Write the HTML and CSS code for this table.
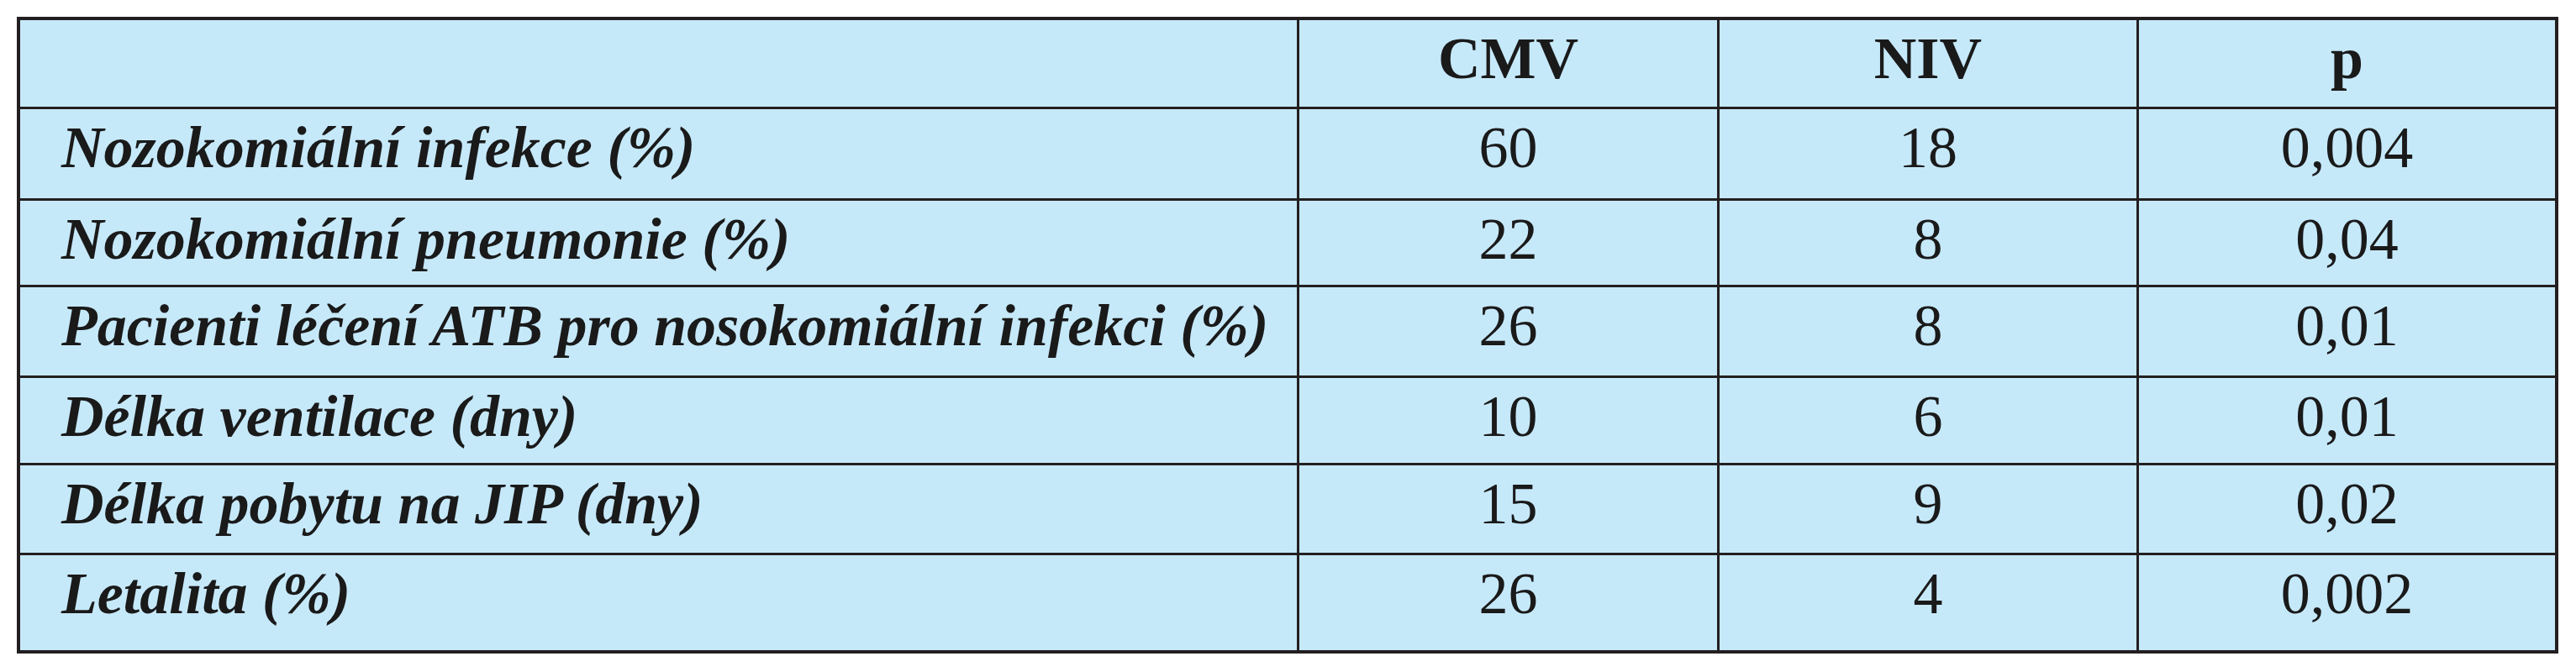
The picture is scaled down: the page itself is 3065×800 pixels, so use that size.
FILE: index.html
```html
<!DOCTYPE html>
<html lang="cs">
<head>
<meta charset="utf-8">
<title>Tabulka</title>
<link rel="stylesheet" href="styles.css">
</head>
<body>
<div class="table">
  <div class="cell head label"></div>
  <div class="cell head">CMV</div>
  <div class="cell head">NIV</div>
  <div class="cell head">p</div>

  <div class="cell label">Nozokomiální infekce (%)</div>
  <div class="cell num">60</div>
  <div class="cell num">18</div>
  <div class="cell num">0,004</div>

  <div class="cell label">Nozokomiální pneumonie (%)</div>
  <div class="cell num">22</div>
  <div class="cell num">8</div>
  <div class="cell num">0,04</div>

  <div class="cell label">Pacienti léčení ATB pro nosokomiální infekci (%)</div>
  <div class="cell num">26</div>
  <div class="cell num">8</div>
  <div class="cell num">0,01</div>

  <div class="cell label">Délka ventilace (dny)</div>
  <div class="cell num">10</div>
  <div class="cell num">6</div>
  <div class="cell num">0,01</div>

  <div class="cell label">Délka pobytu na JIP (dny)</div>
  <div class="cell num">15</div>
  <div class="cell num">9</div>
  <div class="cell num">0,02</div>

  <div class="cell label">Letalita (%)</div>
  <div class="cell num">26</div>
  <div class="cell num">4</div>
  <div class="cell num">0,002</div>
</div>
</body>
</html>
```

FILE: styles.css
```css
html, body {
  margin: 0;
  padding: 0;
  background: #ffffff;
}

body {
  padding: 20px 0 0 20px;
  font-family: "Liberation Serif", "Times New Roman", serif;
  color: #1a1a1a;
}

.table {
  display: grid;
  width: 3024px;
  box-sizing: border-box;
  grid-template-columns: 1519px 497px 496px 495px;
  grid-template-rows: 103px 106px 100px 105px 101px 104px 113px;
  gap: 3px;
  padding: 4px;
  background: #231f20;
}

.cell {
  background: #c6e9fa;
  font-size: 70px;
  line-height: 70px;
  padding-top: 11px;
  box-sizing: border-box;
  text-align: center;
  white-space: nowrap;
}

.head {
  font-weight: bold;
}

.label {
  text-align: left;
  padding-left: 49px;
  font-style: italic;
  font-weight: bold;
}

.num {
  font-weight: normal;
}
```
